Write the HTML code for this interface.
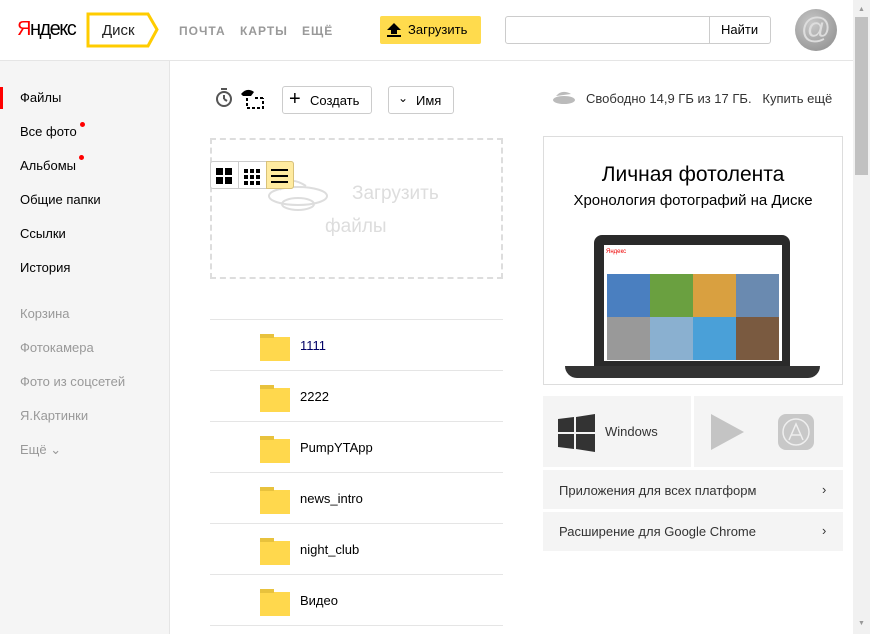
<!DOCTYPE html>
<html><head><meta charset="utf-8"><style>
*{margin:0;padding:0;box-sizing:border-box}
html,body{width:870px;height:634px;overflow:hidden}
body{font-family:"Liberation Sans",sans-serif;background:#fff;position:relative;color:#000}
.a{position:absolute}
.nav{font-size:12px;color:#999;letter-spacing:1px;font-weight:bold;top:24px}
.side{left:0;top:61px;width:170px;height:573px;background:#f5f5f5;border-right:1px solid #e5e5e5}
.si{position:absolute;left:20px;font-size:13px;color:#000}
.sg{color:#999}
.dot{position:absolute;width:5px;height:5px;border-radius:50%;background:#f00}
.row{position:absolute;left:210px;width:293px;height:51px;border-top:1px solid #e5e5e5}
.fold{position:absolute;left:50px;top:17px;width:30px;height:24px;background:#ffd84d}
.fold:before{content:"";position:absolute;left:0;top:-3px;width:14px;height:4px;background:#e8c23d}
.fn{position:absolute;left:90px;top:18px;font-size:13px}
.btn{position:absolute;border:1px solid #ccc;border-radius:3px;height:28px;font-size:13px;background:#fff}
.gp{position:absolute;background:#f4f4f4;font-size:13px;color:#333}
</style></head><body>
<div class="a" style="left:0;top:60px;width:853px;height:1px;background:#e5e5e5"></div>
<div class="a" style="left:17px;top:18px;font-size:20px;letter-spacing:-1.5px"><span style="color:#f00">Я</span>ндекс</div>
<svg class="a" style="left:86px;top:12px" width="74" height="36"><path d="M2 2H62L71 17.5L62 34H2Z" fill="#fff" stroke="#fc0" stroke-width="3"/></svg>
<div class="a" style="left:102px;top:22px;font-size:15px;color:#222">Диск</div>
<div class="a nav" style="left:179px">ПОЧТА</div>
<div class="a nav" style="left:240px">КАРТЫ</div>
<div class="a nav" style="left:302px">ЕЩЁ</div>
<div class="a" style="left:380px;top:16px;width:101px;height:28px;background:#ffdb4d;border-radius:2px"></div>
<svg class="a" style="left:386px;top:22px" width="16" height="16"><path d="M8 1L15 8H11V12H5V8H1Z" fill="#000"/><rect x="1" y="13" width="14" height="2"/></svg>
<div class="a" style="left:408px;top:22px;font-size:13px">Загрузить</div>
<div class="a" style="left:505px;top:16px;width:266px;height:28px;border:1px solid #ccc;border-radius:3px"></div>
<div class="a" style="left:709px;top:16px;width:1px;height:28px;background:#ccc"></div>
<div class="a" style="left:721px;top:22px;font-size:13px">Найти</div>
<div class="a" style="left:795px;top:9px;width:42px;height:42px;border-radius:50%;background:radial-gradient(circle at 40% 35%,#c8c8c8,#8a8a8a);color:#ddd;font-size:30px;text-align:center;line-height:40px">@</div>
<div class="a" style="left:853px;top:0;width:17px;height:634px;background:#f1f1f1"></div>
<div class="a" style="left:855px;top:17px;width:13px;height:158px;background:#c1c1c1"></div>
<div class="a" style="left:858px;top:6px;font-size:7px;color:#999">▲</div>
<div class="a" style="left:858px;top:620px;font-size:7px;color:#999">▼</div>

<div class="a side"></div>
<div class="a" style="left:0;top:87px;width:3px;height:22px;background:#f00"></div>
<div class="si" style="top:90px">Файлы</div>
<div class="si" style="top:124px">Все фото</div><div class="dot" style="left:80px;top:122px"></div>
<div class="si" style="top:158px">Альбомы</div><div class="dot" style="left:79px;top:155px"></div>
<div class="si" style="top:192px">Общие папки</div>
<div class="si" style="top:226px">Ссылки</div>
<div class="si" style="top:260px">История</div>
<div class="si sg" style="top:306px">Корзина</div>
<div class="si sg" style="top:340px">Фотокамера</div>
<div class="si sg" style="top:374px">Фото из соцсетей</div>
<div class="si sg" style="top:408px">Я.Картинки</div>
<div class="si sg" style="top:442px">Ещё ⌄</div>

<svg class="a" style="left:214px;top:87px" width="20" height="22"><circle cx="10" cy="12" r="7" fill="none" stroke="#555" stroke-width="2"/><path d="M7 2H13M10 12V8M10 12L13 14" stroke="#555" stroke-width="2" fill="none"/></svg>
<svg class="a" style="left:239px;top:86px" width="26" height="24"><path d="M2 8Q8 1 15 6L12 10H4Z" fill="#000"/><path d="M8 12V22H24V12M16 12H24" stroke="#000" stroke-width="2" stroke-dasharray="3 2" fill="none"/></svg>
<div class="btn" style="left:282px;top:86px;width:90px"><span class="a" style="left:6px;top:1px;font-size:20px">+</span><span class="a" style="left:27px;top:6px">Создать</span></div>
<div class="btn" style="left:388px;top:86px;width:66px"><span class="a" style="left:9px;top:4px;font-size:12px">⌄</span><span class="a" style="left:27px;top:6px">Имя</span></div>
<svg class="a" style="left:552px;top:89px" width="24" height="16"><ellipse cx="12" cy="11" rx="11" ry="4" fill="#bbb"/><path d="M4 7Q10 0 19 5Z" fill="#bbb"/></svg>
<div class="a" style="left:586px;top:91px;font-size:13px;color:#333">Свободно 14,9 ГБ из 17 ГБ.&nbsp;&nbsp; Купить ещё</div>

<div class="a" style="left:210px;top:138px;width:293px;height:141px;border:2px dashed #ddd"></div>
<svg class="a" style="left:268px;top:176px" width="64" height="40"><path d="M12 14Q20 -2 38 10" fill="none" stroke="#ddd" stroke-width="2"/><ellipse cx="30" cy="20" rx="29" ry="9" fill="none" stroke="#ddd" stroke-width="2"/><ellipse cx="30" cy="28" rx="16" ry="6" fill="none" stroke="#ddd" stroke-width="2"/></svg>
<div class="a" style="left:352px;top:183px;font-size:19px;color:#ddd">Загрузить</div>
<div class="a" style="left:325px;top:216px;font-size:19px;color:#ddd">файлы</div>
<div class="a" style="left:210px;top:161px;width:84px;height:28px;border:1px solid #ccc;border-radius:3px;background:#fff"></div>
<div class="a" style="left:238px;top:162px;width:1px;height:26px;background:#ccc"></div>
<div class="a" style="left:266px;top:161px;width:28px;height:28px;background:#ffeba0;border:1px solid #d9c27a;border-radius:0 3px 3px 0"></div>
<svg class="a" style="left:215px;top:167px" width="76" height="18"><rect x="1" y="1" width="7" height="7"/><rect x="10" y="1" width="7" height="7"/><rect x="1" y="10" width="7" height="7"/><rect x="10" y="10" width="7" height="7"/><g transform="translate(29,2)"><rect width="4" height="4"/><rect x="6" width="4" height="4"/><rect x="12" width="4" height="4"/><rect y="6" width="4" height="4"/><rect x="6" y="6" width="4" height="4"/><rect x="12" y="6" width="4" height="4"/><rect y="12" width="4" height="4"/><rect x="6" y="12" width="4" height="4"/><rect x="12" y="12" width="4" height="4"/></g><rect x="56" y="2" width="17" height="2"/><rect x="56" y="8" width="17" height="2"/><rect x="56" y="14" width="17" height="2"/></svg>

<div class="row" style="top:319px"><div class="fold"></div><div class="fn" style="color:#006">1111</div></div>
<div class="row" style="top:370px"><div class="fold"></div><div class="fn">2222</div></div>
<div class="row" style="top:421px"><div class="fold"></div><div class="fn">PumpYTApp</div></div>
<div class="row" style="top:472px"><div class="fold"></div><div class="fn">news_intro</div></div>
<div class="row" style="top:523px"><div class="fold"></div><div class="fn">night_club</div></div>
<div class="row" style="top:574px"><div class="fold"></div><div class="fn">Видео</div></div>
<div class="row" style="top:625px;height:9px"></div>

<div class="a" style="left:543px;top:136px;width:300px;height:249px;border:1px solid #ddd"></div>
<div class="a" style="left:543px;top:163px;width:300px;text-align:center;font-size:21px">Личная фотолента</div>
<div class="a" style="left:543px;top:192px;width:300px;text-align:center;font-size:15px">Хронология фотографий на Диске</div>
<div class="a" style="left:594px;top:235px;width:196px;height:135px;background:#2a2a2a;border-radius:8px 8px 0 0"></div>
<div class="a" style="left:565px;top:366px;width:255px;height:12px;background:#333;border-radius:0 0 20px 20px"></div>
<div class="a" style="left:604px;top:245px;width:178px;height:116px;background:#fff"></div>
<div class="a" style="left:606px;top:249px;font-size:6px;color:#e00">Яндекс</div>
<div class="a" style="left:607px;top:274px;width:172px;height:86px;display:grid;grid-template-columns:repeat(4,1fr);grid-template-rows:1fr 1fr">
<div style="background:#4a7fc0"></div><div style="background:#6aa040"></div><div style="background:#d9a040"></div><div style="background:#6a8ab0"></div>
<div style="background:#999"></div><div style="background:#8ab0d0"></div><div style="background:#4aa0d8"></div><div style="background:#7a5a40"></div></div>

<div class="gp" style="left:543px;top:396px;width:148px;height:71px"></div>
<div class="gp" style="left:694px;top:396px;width:149px;height:71px"></div>
<svg class="a" style="left:558px;top:414px" width="38" height="38"><path d="M0 5L16 3V18H0ZM18 3L37 0V18H18ZM0 20H16V35L0 33ZM18 20H37V38L18 35Z" fill="#333"/></svg>
<div class="a" style="left:605px;top:424px;font-size:13px;color:#333">Windows</div>
<svg class="a" style="left:711px;top:414px" width="34" height="36"><path d="M0 0L33 18L0 36Z" fill="#c4c4c4"/></svg>
<div class="a" style="left:778px;top:414px;width:36px;height:36px;border-radius:8px;background:#c8c8c8"></div>
<svg class="a" style="left:778px;top:414px" width="36" height="36"><circle cx="18" cy="18" r="13" fill="none" stroke="#eee" stroke-width="1.5"/><path d="M11 26L18 10L25 26M13 21H23" fill="none" stroke="#eee" stroke-width="1.5"/></svg>
<div class="gp" style="left:543px;top:470px;width:300px;height:39px"><span class="a" style="left:16px;top:13px">Приложения для всех платформ</span><span class="a" style="left:279px;top:12px">›</span></div>
<div class="gp" style="left:543px;top:512px;width:300px;height:39px"><span class="a" style="left:16px;top:12px">Расширение для Google Chrome</span><span class="a" style="left:279px;top:11px">›</span></div>
</body></html>
